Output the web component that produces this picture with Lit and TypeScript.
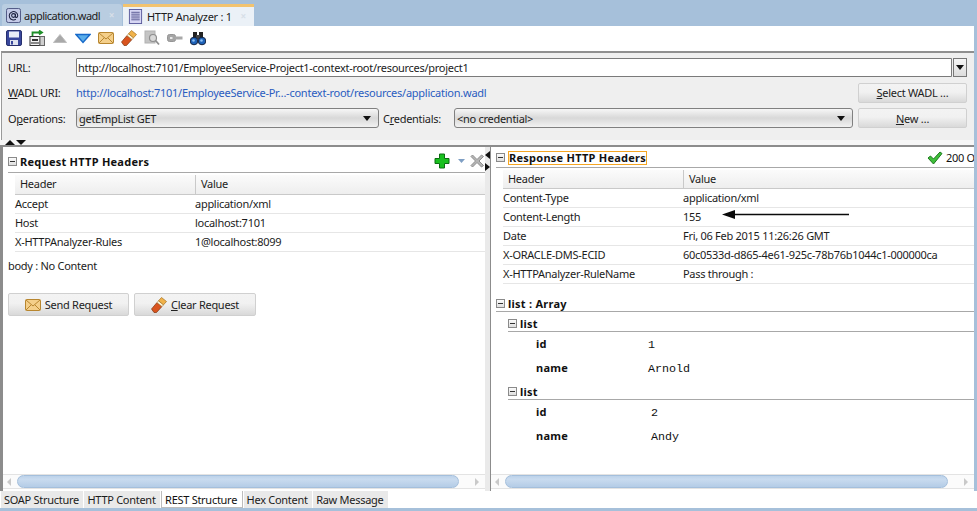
import { LitElement, html, css, svg } from "lit";
import { customElement } from "lit/decorators.js";

const mail = svg`<rect x="0.5" y="2.5" width="15" height="11" rx="1" fill="#f4cf8a" stroke="#b8862f"/><path d="M1 3l7 6 7-6M1 13l5-5M15 13l-5-5" fill="none" stroke="#b8862f"/>`;
const eraser = svg`<path d="M.5 12L6 5.500l5 4L5.500 15.500H3z" fill="#d9541e" stroke="#7d3410" stroke-width=".7"/><path d="M6 5.500L7.500 3.800l5 4L11 9.500z" fill="#fff6dc" stroke="#a98a45" stroke-width=".6"/><path d="M7.500 3.800L10.500 .5l5 4-3 3.300z" fill="#f0b24a" stroke="#a5701e" stroke-width=".7"/>`;

const ico = (c: unknown, w = 16, h = 16) =>
  html`<svg class="ico" width=${w} height=${h} viewBox="0 0 16 16">${c}</svg>`;

const toolIcons = [
  svg`<rect x="0.500" y="0.500" width="15" height="15" rx="1.500" fill="#39479c" stroke="#27306e"/><rect x="3" y="1.500" width="10" height="6" fill="#e9edf7"/><rect x="4" y="10" width="8" height="5" fill="#dfe3ef"/><rect x="5" y="11" width="2" height="3.500" fill="#39479c"/>`,
  svg`<rect x="1" y="6.500" width="10" height="9" fill="#f2f2f2" stroke="#333"/><rect x="3" y="9" width="6" height="2" fill="#333"/><rect x="2" y="12" width="8" height="2" fill="#888"/><rect x="11" y="6.500" width="4.500" height="9" fill="#cfcfcf" stroke="#666"/><path d="M3.500 6V2.500h8.500M10 .5l3 2-3 2" fill="none" stroke="#1f8f2a" stroke-width="1.800"/>`,
  svg`<path d="M1.500 12.500L8 4.500l6.500 8z" fill="#a9a9a9" stroke="#bdbdbd"/>`,
  svg`<path d="M1 4.500h14L8 12.500z" fill="#5aaeea" stroke="#1769c9" stroke-width="1.400"/>`,
  mail,
  eraser,
  svg`<rect x="1" y="1" width="10" height="12" fill="#c4c4c4" stroke="#b2b2b2"/><circle cx="9" cy="8" r="3.500" fill="#d9d9d9" stroke="#8e8e8e" stroke-width="1.200"/><path d="M11.500 10.500L15 14.500" stroke="#8e8e8e" stroke-width="1.800"/>`,
  svg`<rect x="0.500" y="4.500" width="8" height="7" rx="2" fill="#a5a5a5" stroke="#959595"/><rect x="3" y="7" width="2.500" height="2" fill="#e8e8e8"/><rect x="8" y="6.500" width="7.500" height="3" fill="#a8a8a8"/>`,
  svg`<rect x="3" y="2" width="4" height="6" fill="#222"/><rect x="9" y="2" width="4" height="6" fill="#222"/><rect x="6" y="5" width="4" height="4" fill="#444"/><circle cx="4" cy="11" r="3.800" fill="#1e62b8" stroke="#15233f"/><circle cx="12" cy="11" r="3.800" fill="#1e62b8" stroke="#15233f"/><circle cx="3.500" cy="10.500" r="1.300" fill="#8cc0f2"/><circle cx="11.500" cy="10.500" r="1.300" fill="#8cc0f2"/>`,
];

const atIcon = svg`<rect x="0.500" y="0.500" width="15" height="15" rx="2" fill="#c5cbe8" stroke="#4a527f"/><circle cx="8" cy="8" r="2" fill="none" stroke="#1c2140" stroke-width="1.100"/><path d="M10 6v3c0 1.500 2.500 1.500 2.500-1A4.500 4.500 0 1 0 10.500 12" fill="none" stroke="#1c2140" stroke-width="1.100"/>`;
const docIcon = svg`<rect x="1.500" y="0.500" width="13" height="15" fill="#d7d7f4" stroke="#5a5a9c"/><path d="M3.500 3.500h9M3.500 5.500h9M3.500 7.500h9M3.500 9.500h9M3.500 11.500h9" stroke="#55558f"/>`;

const reqRows = [
  ["Accept", "application/xml"],
  ["Host", "localhost:7101"],
  ["X-HTTPAnalyzer-Rules", "1@localhost:8099"],
];
const resRows = [
  ["Content-Type", "application/xml"],
  ["Content-Length", "155"],
  ["Date", "Fri, 06 Feb 2015 11:26:26 GMT"],
  ["X-ORACLE-DMS-ECID", "60c0533d-d865-4e61-925c-78b76b1044c1-000000ca"],
  ["X-HTTPAnalyzer-RuleName", "Pass through :"],
];
const bottomTabs = ["SOAP Structure", "HTTP Content", "REST Structure", "Hex Content", "Raw Message"];

@customElement("app-root")
export class AppRoot extends LitElement {
  static styles = css`
    :host { display: block; width: 977px; height: 511px; overflow: hidden; }
    * { box-sizing: border-box; }
    .root { width: 977px; height: 511px; display: flex; flex-direction: column; background: #fff;
      font: 11px/13px "Noto Sans", "Liberation Sans", sans-serif; letter-spacing: -0.28px; color: #1c1c1c; }
    .ico { display: block; flex: none; }
    u { text-decoration: underline; }

    .strip { height: 26px; flex: none; background: #a6c0da; display: flex; padding: 4px 0 0 2px; gap: 1px; }
    .tab { height: 22px; display: flex; align-items: center; white-space: nowrap; }
    .tab .ico { width: 15px; height: 15px; }
    .tab.off { width: 120px; background: #b9cde1; border-radius: 3px 3px 0 0; padding: 0 8px 0 4px; gap: 3px; letter-spacing: -0.52px; }
    .tab.on { width: 131px; background: #ebf1f7; border-top: 3px solid #f2c36f; padding: 0 8px 0 5px; gap: 4px; }
    .tab .x { margin-left: auto; color: #d7dfe8; font-size: 10px; font-weight: 700; }
    .tools { height: 25px; flex: none; display: flex; align-items: center; gap: 7px; padding: 0 0 1px 6px; background: #fff; }

    .wrap { flex: 1; min-height: 0; display: flex; flex-direction: column; border-right: 3px solid #a6c0da; }
    .form { flex: none; height: 89px; background: #efefef; border-top: 2px solid #8f8f8f;
      margin-left: 1px; border-left: 1px solid #9a9a9a;
      display: grid; grid-template-columns: 68px 1fr; grid-template-rows: 19px 31px 20px; padding: 5px 0 0 6px; }
    .lab { display: flex; align-items: center; }
    .urlrow { display: flex; padding-right: 7px; }
    .input { flex: 1; height: 19px; background: #fff; border: 1px solid #7a7a7a; display: flex; align-items: center; padding-left: 1px; border-radius: 1px 0 0 1px; }
    .dd { width: 14px; height: 19px; margin-left: 1px; background: linear-gradient(#f6f6f6, #dcdcdc); border: 1px solid #777; display: flex; align-items: center; justify-content: center; }
    .tri { width: 0; height: 0; border-left: 4px solid transparent; border-right: 4px solid transparent; border-top: 5px solid #111; }
    .wadlrow { display: flex; align-items: center; padding-right: 7px; color: #2a5cc0; justify-content: space-between; letter-spacing: -0.245px; }
    .btn { background: linear-gradient(#f3f3f3, #f1f1f1 45%, #d9d9d9); border: 1px solid #d0d0d0; border-radius: 2px; display: flex; align-items: center; justify-content: center; gap: 4px; color: #222; letter-spacing: -0.28px; }
    .b110 { width: 109px; height: 20px; flex: none; }
    .oprow { display: flex; align-items: center; padding-right: 7px; }
    .sel { height: 20px; border: 1px solid #808080; border-radius: 3px; background: linear-gradient(#f7f7f7, #d8d8d8 50%, #f2f2f2); display: flex; align-items: center; justify-content: space-between; padding: 0 7px 0 2px; }
    .s1 { width: 303px; }
    .credlab { width: 75px; padding-left: 4px; }
    .s2 { width: 399px; margin-right: 5px; }

    .split { flex: none; height: 5px; background: #f6f6f6; position: relative; }
    .split .a, .split .b { position: absolute; top: 0; width: 0; height: 0; border-left: 5px solid transparent; border-right: 5px solid transparent; }
    .split .a { left: 5px; border-bottom: 5px solid #111; }
    .split .b { left: 16px; border-top: 5px solid #111; }

    .main { flex: 1; min-height: 0; display: flex; border-top: 2px solid #8c8c8c; border-left: 3px solid #8c8c8c; }
    .pane { display: flex; flex-direction: column; min-width: 0; position: relative; }
    .left { width: 482px; }
    .bar { width: 6px; flex: none; background: #eaeaea; border-right: 1px solid #8c8c8c; position: relative; }
    .bar .a, .bar .b { position: absolute; left: 0; width: 0; height: 0; border-top: 4px solid transparent; border-bottom: 4px solid transparent; }
    .bar .a { top: 4px; border-right: 5px solid #111; }
    .bar .b { top: 16px; border-left: 5px solid #111; }
    .right { flex: 1; }
    .content { flex: 1; min-height: 0; }
    .lc { padding: 8px 0 0 5px; }
    .rc { padding: 4px 0 0 5px; }

    .sect { display: flex; align-items: center; gap: 3px; border-bottom: 1px solid #a8a8a8; font-weight: 700; color: #111; letter-spacing: 0.25px; }
    .box { width: 9px; height: 9px; flex: none; border: 1px solid #8a8a8a; background: linear-gradient(#fbfbfb, #dedede); position: relative; }
    .box::after { content: ""; position: absolute; left: 1px; right: 1px; top: 3px; height: 1px; background: #333; }
    .lsec { height: 18px; padding-bottom: 5px; }
    .rsec { height: 17px; padding-bottom: 3px; }
    .focus { border: 1px solid #f5a623; height: 14px; display: flex; align-items: center; padding-bottom: 1px; }
    .lact { margin-left: auto; display: flex; align-items: center; }
    .plusdrop { margin: 0 1px 0 4px; }
    .status { margin-left: auto; display: flex; align-items: center; gap: 3px; font-weight: 400; letter-spacing: -0.28px; width: 47px; white-space: nowrap; overflow: hidden; }

    .tbl { display: grid; margin: 2px 0 0 7px; grid-template-columns: 180px 1fr; }
    .th { height: 20px; display: flex; align-items: center; background: linear-gradient(#fbfbfb, #eeeeee); border-bottom: 1px solid #c9c9c9; padding: 0 0 2px 5px; }
    .rt .th { height: 19px; }
    .th + .th { border-left: 1px solid #c9c9c9; }
    .td { height: 19px; display: flex; align-items: center; border-bottom: 1px solid #e6e6e6; white-space: nowrap; padding-bottom: 1px; }
    .body { margin-top: 7px; }
    .actions { display: flex; gap: 5px; margin-top: 21px; }
    .act { height: 23px; }
    .send { width: 121px; }
    .clear { width: 122px; }

    .arrowed { position: relative; }
    .arrow { position: absolute; left: 39px; top: 2px; }

    .l1 { margin-top: 13px; height: 15px; padding-bottom: 2px; }
    .l2 { margin: 5px 0 0 12px; height: 15px; padding-bottom: 1px; }
    .kvs { height: 48px; }
    .kv { display: grid; grid-template-columns: 112px 1fr; margin-left: 40px; height: 24px; align-items: center; letter-spacing: 0.25px; }
    .kv b { color: #111; margin-top: -2px; }
    .kv span { font: 11.7px/14px "Liberation Mono", monospace; letter-spacing: 0; color: #111; margin-top: 2px; }
    .nudge span { padding-left: 3px; }

    .sb { flex: none; height: 15px; margin-bottom: 2px; display: flex; align-items: center; border-top: 1px solid #e3e3e3; border-bottom: 1px solid #e3e3e3; background: #fbfbfb; }
    .sb i { font-style: normal; width: 0; height: 0; border-top: 4px solid transparent; border-bottom: 4px solid transparent; flex: none; }
    .sb .pl { border-right: 4px solid #c9c9c9; margin: 0 6px 0 4px; }
    .sb .pr { border-left: 4px solid #c9c9c9; margin: 0 6px 0 16px; }
    .thumb { flex: 1; height: 13px; border-radius: 7px; background: linear-gradient(#bcd2ea, #c9dbef 30%, #b4cce6); border: 1px solid #a4bfdc; }

    .btabs { flex: none; height: 20px; display: flex; padding: 0 0 0 1px; gap: 1px; background: #fff; border-bottom: 3px solid #a6c0da; margin-right: -3px; }
    .bt { height: 17px; padding: 0 4.5px 0 3px; background: #e9e9e9; display: flex; align-items: center; white-space: nowrap; }
    .bt.on { background: #fff; border: 1px solid #bdbdbd; border-top: 0; color: #111; }
  `;

  render() {
    return html`<div class="root">
      <div class="strip">
        <div class="tab off">${ico(atIcon)}<span>application.wadl</span><span class="x">×</span></div>
        <div class="tab on">${ico(docIcon)}<span>HTTP Analyzer : 1</span><span class="x">×</span></div>
      </div>
      <div class="wrap">
      <div class="tools">${toolIcons.map((i) => ico(i))}</div>
      <div class="form">
        <div class="lab">URL:</div>
        <div class="urlrow"><div class="input">http://localhost:7101/EmployeeService-Project1-context-root/resources/project1</div><div class="dd"><div class="tri"></div></div></div>
        <div class="lab"><span><u>W</u>ADL URI:</span></div>
        <div class="wadlrow"><span>http://localhost:7101/EmployeeService-Pr…-context-root/resources/application.wadl</span><div class="btn b110"><span><u>S</u>elect WADL …</span></div></div>
        <div class="lab"><span>O<u>p</u>erations:</span></div>
        <div class="oprow">
          <div class="sel s1"><span>getEmpList GET</span><div class="tri"></div></div>
          <div class="lab credlab"><span>C<u>r</u>edentials:</span></div>
          <div class="sel s2"><span>&lt;no credential&gt;</span><div class="tri"></div></div>
          <div class="btn b110"><span><u>N</u>ew …</span></div>
        </div>
      </div>
      <div class="split"><div class="a"></div><div class="b"></div></div>
      <div class="main">
        <div class="pane left">
          <div class="content lc">
            <div class="sect lsec"><div class="box"></div><span>Request HTTP Headers</span>
              <div class="lact">
                <svg class="ico" width="16" height="16" viewBox="0 0 16 16"><path d="M5.500 1h5v4.500H15v5h-4.500V15h-5v-4.500H1v-5h4.500z" fill="#19c01f" stroke="#0b6e10"/></svg>
                <svg class="ico plusdrop" width="14" height="8" viewBox="0 0 14 8"><path d="M4 2h7L7.500 6z" fill="#7f9fc4"/></svg>
                <svg class="ico" width="16" height="16" viewBox="0 0 16 16"><path d="M2 3.500L3.500 2 8 6.500 12.500 2 14.500 3.500 10 8l4.500 4.500-2 1.500L8 9.500 3.500 14 2 12.500 6.500 8z" fill="#b5b5b5" stroke="#8e8e8e"/></svg>
              </div>
            </div>
            <div class="tbl lt">
              <div class="th">Header</div><div class="th">Value</div>
              ${reqRows.map((r) => html`<div class="td k">${r[0]}</div><div class="td">${r[1]}</div>`)}
            </div>
            <div class="body">body : No Content</div>
            <div class="actions">
              <div class="btn act send">${ico(mail)}<span>Send Request</span></div>
              <div class="btn act clear">${ico(eraser)}<span><u>C</u>lear Request</span></div>
            </div>
          </div>
          <div class="sb"><i class="pl"></i><div class="thumb"></div><i class="pr"></i></div>
        </div>
        <div class="bar"><div class="a"></div><div class="b"></div></div>
        <div class="pane right">
          <div class="content rc">
            <div class="sect rsec"><div class="box"></div><span class="focus">Response HTTP Headers</span>
              <div class="status">
                <svg class="ico" width="16" height="14" viewBox="0 0 16 14"><path d="M1 7l2.500-2L6.500 8 13 1l2 1.500L6.500 13z" fill="#3fbf3a" stroke="#1d7a1d"/></svg><span>200 OK</span>
              </div>
            </div>
            <div class="tbl rt">
              <div class="th">Header</div><div class="th">Value</div>
              ${resRows.map((r) => html`<div class="td k">${r[0]}</div>
                <div class="td ${r[1] === "155" ? "arrowed" : ""}">${r[1]}${r[1] === "155"
                  ? html`<svg class="arrow" width="127" height="9" viewBox="0 0 127 9"><path d="M0 4.500L13 0v3.700h114v1.600H13V9z" fill="#0a0a0a"/></svg>`
                  : ""}</div>`)}
            </div>
            <div class="sect l1"><div class="box"></div><span>list : Array</span></div>
            <div class="sect l2"><div class="box"></div><span>list</span></div>
            <div class="kvs">
              <div class="kv"><b>id</b><span>1</span></div>
              <div class="kv"><b>name</b><span>Arnold</span></div>
            </div>
            <div class="sect l2"><div class="box"></div><span>list</span></div>
            <div class="kvs nudge">
              <div class="kv"><b>id</b><span>2</span></div>
              <div class="kv"><b>name</b><span>Andy</span></div>
            </div>
          </div>
          <div class="sb"><i class="pl"></i><div class="thumb"></div><i class="pr"></i></div>
        </div>
      </div>
      <div class="btabs">${bottomTabs.map((t) => html`<div class="bt ${t === "REST Structure" ? "on" : ""}">${t}</div>`)}</div>
      </div>
    </div>`;
  }
}
